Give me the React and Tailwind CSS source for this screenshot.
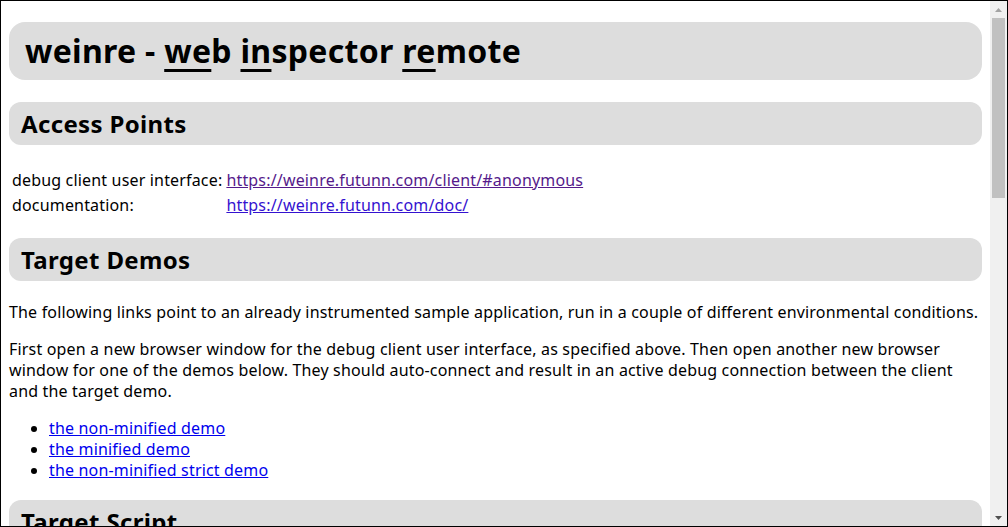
import React from "react";

const font = { fontFamily: '"Noto Sans", "Open Sans", sans-serif' };

const Heading = ({ children, big, className = "" }) =>
  big ? (
    <h1 className="rounded-2xl bg-[#dddddd] px-4 py-2 text-[32px] font-bold leading-[42px] tracking-[0.3px] text-black">
      {children}
    </h1>
  ) : (
    <h2
      className={`rounded-xl bg-[#dddddd] px-3 py-[6px] text-2xl font-bold leading-[31px] tracking-[0.35px] text-black ${className}`}
    >
      {children}
    </h2>
  );

const Scrollbar = () => (
  <div className="flex w-[17px] flex-col bg-[#f0f0f0]">
    <div className="flex h-[17px] items-center justify-center">
      <svg width="7" height="4" viewBox="0 0 7 4">
        <path d="M0 4 L3.5 0 L7 4 Z" fill="#a3a3a3" />
      </svg>
    </div>
    <div className="mx-[2px] h-[180px] bg-[#c1c1c1]" />
    <div className="flex-1" />
    <div className="flex h-[17px] items-center justify-center">
      <svg width="7" height="4" viewBox="0 0 7 4">
        <path d="M0 0 L7 0 L3.5 4 Z" fill="#505050" />
      </svg>
    </div>
  </div>
);

export default function App() {
  return (
    <div className="flex h-[527px] w-[1008px] overflow-hidden border border-black bg-white" style={font}>
      <div className="flex-1 overflow-hidden px-2 pt-[21px] text-base leading-[21px] tracking-[0.17px] text-black">
        <Heading big>
          weinre -{" "}
          <span className="underline decoration-[3px] underline-offset-[6px]">we</span>b{" "}
          <span className="underline decoration-[3px] underline-offset-[6px]">in</span>spector{" "}
          <span className="underline decoration-[3px] underline-offset-[6px]">re</span>mote
        </Heading>

        <Heading className="mt-[22px]">Access Points</Heading>
        <table className="mt-[22px] border-separate border-spacing-[2px]">
          <tbody>
            <tr>
              <td className="w-[212px] whitespace-nowrap p-px">debug client user interface:</td>
              <td className="whitespace-nowrap p-px">
                <a href="#" className="text-[#551a8b] underline">
                  https://weinre.futunn.com/client/#anonymous
                </a>
              </td>
            </tr>
            <tr>
              <td className="whitespace-nowrap p-px">documentation:</td>
              <td className="whitespace-nowrap p-px">
                <a href="#" className="text-[#3412d0] underline">
                  https://weinre.futunn.com/doc/
                </a>
              </td>
            </tr>
          </tbody>
        </table>

        <Heading className="mt-[19px]">Target Demos</Heading>
        <p className="mt-[21px]">
          The following links point to an already instrumented sample application, run in a couple of different
          environmental conditions.
        </p>
        <p className="mt-4">
          First open a new browser window for the debug client user interface, as specified above. Then open another
          new browser window for one of the demos below. They should auto-connect and result in an active debug
          connection between the client and the target demo.
        </p>
        <ul className="mt-4 list-disc pl-10">
          {["the non-minified demo", "the minified demo", "the non-minified strict demo"].map((t) => (
            <li key={t}>
              <a href="#" className="text-[#0000ee] underline">
                {t}
              </a>
            </li>
          ))}
        </ul>

        <Heading className="mt-[19px]">Target Script</Heading>
      </div>
      <Scrollbar />
    </div>
  );
}
